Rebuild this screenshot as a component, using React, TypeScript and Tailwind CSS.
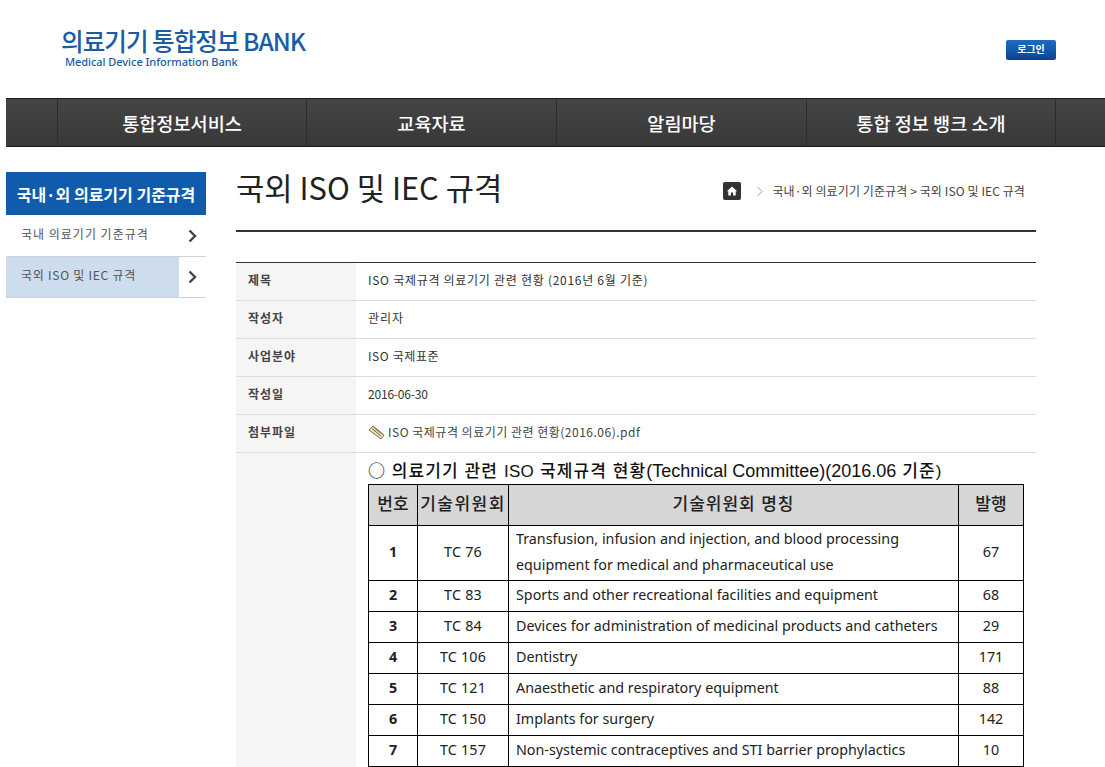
import React from "react";

const KR = "font-['Noto_Sans_CJK_KR',sans-serif]";
const BODY = "font-['Noto_Sans','Noto_Sans_CJK_KR',sans-serif]";
const HEAD = "font-['Liberation_Sans','Noto_Sans_CJK_KR',sans-serif]";

const navItems: [string, string][] = [
  ["통합정보서비스", "w-[249px]"],
  ["교육자료", "w-[250px]"],
  ["알림마당", "w-[250px]"],
  ["통합 정보 뱅크 소개", "w-[249px]"],
];

const infoRows: [string, string, string][] = [
  ["제목", "ISO 국제규격 의료기기 관련 현황 (2016년 6월 기준)", "tracking-[0.72px]"],
  ["작성자", "관리자", "tracking-[1px]"],
  ["사업분야", "ISO 국제표준", "tracking-[0.6px]"],
  ["작성일", "2016-06-30", "tracking-[-0.2px]"],
];

const tcRows = [
  ["2", "TC 83", "Sports and other recreational facilities and equipment", "68"],
  ["3", "TC 84", "Devices for administration of medicinal products and catheters", "29"],
  ["4", "TC 106", "Dentistry", "171"],
  ["5", "TC 121", "Anaesthetic and respiratory equipment", "88"],
  ["6", "TC 150", "Implants for surgery", "142"],
  ["7", "TC 157", "Non-systemic contraceptives and STI barrier prophylactics", "10"],
];

function Chevron() {
  return (
    <svg width="9" height="14" viewBox="0 0 9 14" fill="none" stroke="#444" strokeWidth="2.4">
      <path d="M1.5 1.5 7 7l-5.500 5.500" />
    </svg>
  );
}

export default function App() {
  return (
    <div className={`w-[1105px] h-[767px] overflow-hidden bg-white ${KR}`}>
      <header className="h-[98px] flex justify-between pl-[61px] pr-[49px]">
        <div className="pt-[25px]">
          <div className="text-[24.6px] leading-[30px] tracking-[-1px] text-[#1a5ca6] font-medium whitespace-nowrap">의료기기 통합정보 BANK</div>
          <div className="pl-[4px] text-[11px] leading-[13px] text-[#1a5ca6] font-['Noto_Sans',sans-serif] font-medium tracking-[-0.05px] whitespace-nowrap">Medical Device Information Bank</div>
        </div>
        <div className="pt-[40px]">
          <div className="w-[50px] h-[20px] rounded-[2px] bg-gradient-to-b from-[#1d6cc0] to-[#0b4593] text-white text-[10px] leading-[18px] text-center font-bold">로그인</div>
        </div>
      </header>

      <nav className="ml-[6px] h-[49px] flex bg-gradient-to-b from-[#454545] to-[#383838] border-y border-[#1c1c1c]">
        <div className="w-[52px] border-r border-[#2c2c2c]" />
        {navItems.map(([n, w]) => (
          <div key={n} className={`${w} border-r border-[#2c2c2c] flex items-center justify-center text-white text-[18.6px] font-medium`}>{n}</div>
        ))}
      </nav>

      <div className="flex pl-[6px] pt-[25px]">
        <aside className="w-[200px] shrink-0">
          <div className="h-[43px] bg-[#105bab] text-white text-[16px] font-bold flex items-center justify-center whitespace-nowrap">국내·외 의료기기 기준규격</div>
          <div className="h-[42px] flex border-b border-[#cdd3da]">
            <div className="w-[173px] pl-[15px] pt-[10px] text-[12px] tracking-[1px] text-[#555] leading-[18px] whitespace-nowrap">국내 의료기기 기준규격</div>
            <div className="flex-1 flex items-center justify-center"><Chevron /></div>
          </div>
          <div className="h-[41px] flex border-b border-[#cdd3da]">
            <div className="w-[173px] bg-[#cddded] pl-[15px] pt-[9px] text-[12px] tracking-[0.75px] text-[#555] leading-[18px] whitespace-nowrap">국외 ISO 및 IEC 규격</div>
            <div className="flex-1 flex items-center justify-center"><Chevron /></div>
          </div>
        </aside>

        <main className="ml-[30px] w-[800px]">
          <div className="h-[60px] flex justify-between border-b-2 border-[#333]">
            <h1 className="text-[30.800px] leading-[34px] -mt-[2px] text-[#222] font-normal whitespace-nowrap">국외 ISO 및 IEC 규격</h1>
            <div className="flex items-start pt-[10px] pr-[11px] text-[12px] leading-[18px] text-[#444] tracking-[0.1px] whitespace-nowrap">
              <span className="w-[18px] h-[18px] rounded-[2px] bg-[#333] flex items-center justify-center mr-[15px]">
                <svg width="12" height="12" viewBox="0 0 12 12" fill="#fff"><path d="M6 1.500.8 6.200h1.500V10.500h2.600V7.500h2.200v3h2.600V6.200h1.500z" /></svg>
              </span>
              <svg width="8" height="18" viewBox="0 0 8 18" fill="none" stroke="#999" className="mr-[8px]"><path d="M1.500 5 6 9.500 1.500 14" /></svg>
              <span>국내·외 의료기기 기준규격 &gt; 국외 ISO 및 IEC 규격</span>
            </div>
          </div>

          <div className="mt-[30px] border-t border-[#333]">
            {infoRows.map(([k, v, t]) => (
              <div key={k} className="flex h-[38px] border-b border-[#ddd]">
                <div className="w-[120px] bg-[#f5f5f5] pl-[12px] pb-[3px] flex items-center text-[12px] font-bold tracking-[1px] text-[#444]">{k}</div>
                <div className={`pl-[12px] pb-[3px] flex items-center text-[12px] text-[#333] whitespace-nowrap ${t}`}>{v}</div>
              </div>
            ))}
            <div className="flex h-[38px] border-b border-[#ddd]">
              <div className="w-[120px] bg-[#f5f5f5] pl-[12px] pb-[3px] flex items-center text-[12px] font-bold tracking-[1px] text-[#444]">첨부파일</div>
              <div className="pl-[12px] pb-[3px] flex items-center text-[12px] text-[#444] gap-[3px] whitespace-nowrap">
                <svg width="17" height="15" viewBox="0 0 17 15"><path d="M1 5 5 1l11 9-3 4z" fill="#f0e2ac" stroke="#7d6f4a" /><path d="M4 3.500l9 7.500M6 2.500l8 6.500" stroke="#666" fill="none" /></svg>
                <span className="tracking-[0.5px]">ISO 국제규격 의료기기 관련 현황(2016.06).pdf</span>
              </div>
            </div>
            <div className="flex">
              <div className="w-[120px] bg-[#f5f5f5] shrink-0" />
              <div className="pl-[12px] pt-[7px]">
                <div className={`h-[24px] text-[17px] leading-[20px] text-[#111] font-medium whitespace-nowrap tracking-[1.1px] ${HEAD}`}>
                  <span className={`${KR} font-normal tracking-[1px]`}>○</span> 의료기기 관련 <span className="tracking-[0.3px]">ISO</span> 국제규격 현황<span className="text-[18px] tracking-[0px] font-normal">(Technical Committee)(2016.06</span> 기준)
                </div>
                <table className={`w-[656px] table-fixed border-collapse text-[14.300px] text-[#222] ${BODY}`}>
                  <colgroup>
                    <col className="w-[49px]" /><col className="w-[91px]" /><col className="w-[450px]" /><col className="w-[65px]" />
                  </colgroup>
                  <thead>
                    <tr className="h-[41px] bg-[#d6d6d6] text-[17px]">
                      <th className="border border-black font-medium text-center p-0 pb-[3px] whitespace-nowrap">번호</th>
                      <th className="border border-black font-medium text-center p-0 pb-[3px] whitespace-nowrap tracking-[1.5px]">기술위원회</th>
                      <th className="border border-black font-medium text-center p-0 pb-[3px] whitespace-nowrap tracking-[1px]">기술위원회 명칭</th>
                      <th className="border border-black font-medium text-center p-0 pb-[3px] whitespace-nowrap">발행</th>
                    </tr>
                  </thead>
                  <tbody>
                    <tr className="h-[55px]">
                      <td className="border border-black text-center font-bold pb-[3px]">1</td>
                      <td className="border border-black text-center pb-[3px] tracking-[0.2px]">TC 76</td>
                      <td className="border border-black px-[7px] pb-[2px] leading-[26px]">Transfusion, infusion and injection, and blood processing equipment for medical and pharmaceutical use</td>
                      <td className="border border-black text-center pb-[3px]">67</td>
                    </tr>
                    {tcRows.map((r) => (
                      <tr key={r[0]} className="h-[31px]">
                        <td className="border border-black text-center font-bold pb-[3px]">{r[0]}</td>
                        <td className="border border-black text-center pb-[3px] tracking-[0.2px]">{r[1]}</td>
                        <td className="border border-black px-[7px] pb-[3px] whitespace-nowrap">{r[2]}</td>
                        <td className="border border-black text-center pb-[3px]">{r[3]}</td>
                      </tr>
                    ))}
                  </tbody>
                </table>
              </div>
            </div>
          </div>
        </main>
      </div>
    </div>
  );
}
